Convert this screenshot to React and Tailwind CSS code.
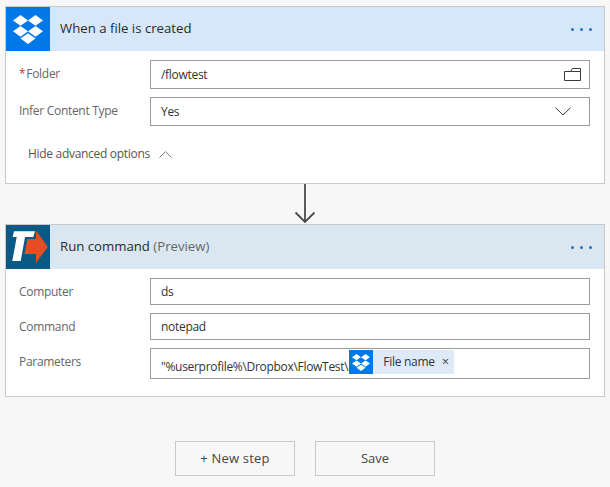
import React from "react";

const DropboxIcon = ({ className }) => (
  <svg viewBox="0 1.8 24 20.4" preserveAspectRatio="none" fill="currentColor" className={className}>
    <path d="M6 1.8L0 5.6l6 3.8 6-3.8L6 1.8zM18 1.8l-6 3.8 6 3.8 6-3.8-6-3.8zM0 13.3l6 3.8 6-3.8-6-3.8-6 3.8zM18 9.5l-6 3.8 6 3.8 6-3.8-6-3.8zM6 18.4l6 3.8 6-3.8-6-3.8-6 3.8z" />
  </svg>
);

const TeamsLogo = () => (
  <svg viewBox="0 0 44 44" className="w-[44px] h-[44px] shrink-0">
    <rect width="44" height="44" fill="#0b5a85" />
    <polygon points="21.5,14 30,14 30,5.5 41.7,21.7 30,38 30,29 18.5,29" fill="#e54e24" />
    <polygon points="8,6.3 29,6.3 27.3,12 19,12 14.7,36 6.3,36 10.7,12 6.7,12" fill="#ffffff" />
  </svg>
);

const Dots = () => (
  <div className="ml-auto mr-[12px] flex items-center gap-[6px]">
    <span className="w-[3px] h-[3px] rounded-full bg-[#2a70bd]" />
    <span className="w-[3px] h-[3px] rounded-full bg-[#2a70bd]" />
    <span className="w-[3px] h-[3px] rounded-full bg-[#2a70bd]" />
  </div>
);

const Field = ({ label, required, height, children }) => (
  <div className="flex items-start">
    <div className="w-[131px] pt-[5px] text-[12px] leading-[18px] tracking-[-0.3px] text-[#666666]">
      {required && <span className="text-[#c0392b] mr-[1px]">*</span>}
      {label}
    </div>
    <div
      className={
        "w-[440px] flex items-center border border-[#9c9c9c] bg-white pl-[10px] pr-[8px] text-[12px] tracking-[-0.3px] text-[#333333] " +
        height
      }
    >
      {children}
    </div>
  </div>
);

export default function App() {
  return (
    <div
      className="w-[610px] h-[487px] overflow-hidden bg-[#f7f7f7] pt-[6px] pl-[5px]"
      style={{ fontFamily: '"Open Sans", "Noto Sans", sans-serif' }}
    >
      <div className="w-[600px] h-[178px] border border-[#c9c9c9] bg-white">
        <div className="h-[44px] flex items-center bg-[#d5e7f9]">
          <div className="w-[44px] h-[44px] shrink-0 flex items-center justify-center bg-[#0078e7] text-white">
            <DropboxIcon className="w-[30px] h-[29px]" />
          </div>
          <div className="ml-[10px] text-[13.2px] text-[#2b2b2b]">When a file is created</div>
          <Dots />
        </div>
        <div className="pt-[9px] pl-[13px] flex flex-col gap-[8px]">
          <Field label="Folder" required height="h-[29px]">
            <span>/flowtest</span>
            <svg viewBox="0 0 17 13" fill="none" stroke="#3a3a3a" className="ml-auto w-[17px] h-[13px]">
              <path d="M.5 3.5v9h16V.5h-8l-2 3z" />
              <path d="M6.5 3.5h10" />
            </svg>
          </Field>
          <Field label="Infer Content Type" height="h-[29px]">
            <span>Yes</span>
            <svg viewBox="0 0 16 9" fill="none" stroke="#3a3a3a" className="ml-auto mr-[10px] w-[16px] h-[9px]">
              <path d="M.5 .7L8 8l7.5-7.3" />
            </svg>
          </Field>
        </div>
        <div className="mt-[19px] ml-[22px] flex items-center gap-[9px] text-[12px] tracking-[-0.3px] text-[#555555]">
          <span>Hide advanced options</span>
          <svg viewBox="0 0 13 7" fill="none" stroke="#777777" className="w-[13px] h-[7px]">
            <path d="M.5 6.5L6.5 .7l6 5.8" />
          </svg>
        </div>
      </div>

      <div className="w-[600px] h-[40px] flex justify-center">
        <svg viewBox="0 0 22 40" fill="none" stroke="#4a4a4a" strokeWidth="1.8" className="w-[22px] h-[40px]">
          <path d="M11 0v38M1.5 28.5L11 38l9.5-9.5" />
        </svg>
      </div>

      <div className="w-[600px] h-[173px] border border-[#c9c9c9] bg-white">
        <div className="h-[44px] flex items-center bg-[#dae6f0]">
          <TeamsLogo />
          <div className="ml-[10px] text-[13.2px] text-[#2b2b2b]">
            Run command <span className="text-[#666666]">(Preview)</span>
          </div>
          <Dots />
        </div>
        <div className="pt-[9px] pl-[13px] flex flex-col gap-[8px]">
          <Field label="Computer" height="h-[27px] pt-[1px]">ds</Field>
          <Field label="Command" height="h-[27px] pt-[1px]">notepad</Field>
          <Field label="Parameters" height="h-[31px]">
            <span className="whitespace-nowrap pt-[6px]">"%userprofile%\Dropbox\FlowTest\</span>
            <div className="ml-[1px] h-[24px] flex items-center self-start mt-[1px] bg-[#deeaf8]">
              <div className="w-[24px] h-[24px] flex items-center justify-center bg-[#0078e7] text-white">
                <DropboxIcon className="w-[18px] h-[17px]" />
              </div>
              <span className="ml-[10px] text-[#333333]">File name</span>
              <span className="ml-[7px] mr-[5px] text-[13px] text-[#444444]">×</span>
            </div>
          </Field>
        </div>
      </div>

      <div className="mt-[44px] ml-[170px] flex gap-[20px]">
        <button className="w-[120px] h-[35px] pt-[1px] border border-[#c9c9c9] text-[13px] tracking-[0.2px] text-[#444444]">+ New step</button>
        <button className="w-[120px] h-[35px] pt-[1px] border border-[#c9c9c9] text-[13px] text-[#444444]">Save</button>
      </div>
    </div>
  );
}
